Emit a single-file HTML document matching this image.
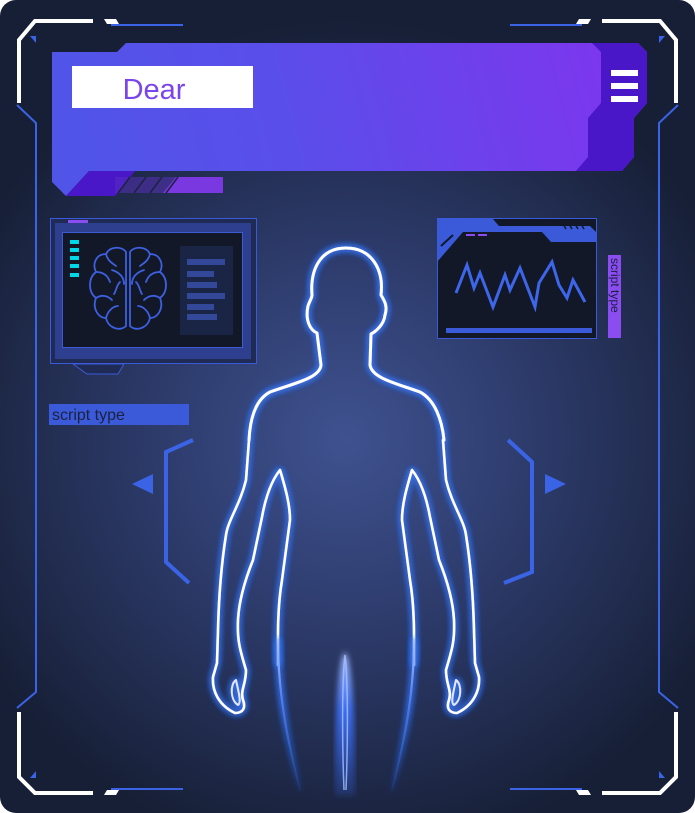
<!DOCTYPE html>
<html><head><meta charset="utf-8"><style>
html,body{margin:0;padding:0;background:#fff;width:695px;height:813px;overflow:hidden}
svg{display:block}
text{font-family:"Liberation Sans",sans-serif}
</style></head><body>
<svg width="695" height="813" viewBox="0 0 695 813" xmlns="http://www.w3.org/2000/svg">
<defs>
<radialGradient id="bg" cx="345" cy="440" r="420" gradientUnits="userSpaceOnUse">
<stop offset="0" stop-color="#3f5290"/><stop offset="0.45" stop-color="#2d3b6b"/><stop offset="1" stop-color="#171f36"/></radialGradient>
<linearGradient id="ban" x1="52" y1="190" x2="640" y2="40" gradientUnits="userSpaceOnUse">
<stop offset="0" stop-color="#4f55e8"/><stop offset="0.4" stop-color="#5a4eea"/><stop offset="1" stop-color="#8034ee"/></linearGradient>
<linearGradient id="fade" x1="0" y1="600" x2="0" y2="800" gradientUnits="userSpaceOnUse">
<stop offset="0" stop-color="#e8eeff"/><stop offset="0.5" stop-color="#4f7cf0"/><stop offset="1" stop-color="#3060e0" stop-opacity="0"/></linearGradient>
<linearGradient id="flame" x1="0" y1="650" x2="0" y2="800" gradientUnits="userSpaceOnUse">
<stop offset="0" stop-color="#a8c0ff"/><stop offset="0.4" stop-color="#3d6ef0"/><stop offset="1" stop-color="#2f5ee0" stop-opacity="0.2"/></linearGradient>
<filter id="glow" x="-30%" y="-30%" width="160%" height="160%">
<feGaussianBlur in="SourceAlpha" stdDeviation="3.5" result="b"/>
<feFlood flood-color="#3a78ff"/><feComposite in2="b" operator="in" result="g"/>
<feMerge><feMergeNode in="g"/><feMergeNode in="g"/><feMergeNode in="g"/><feMergeNode in="SourceGraphic"/></feMerge></filter>
<filter id="blur2"><feGaussianBlur stdDeviation="3"/></filter>
</defs>
<rect x="0" y="0" width="695" height="813" rx="16" fill="url(#bg)"/>
<g fill="none" stroke="#3a63e6" stroke-width="2">
<polyline points="17,105 36,123 36,692 17,708"/>
<polyline points="678,105 659,123 659,692 678,708"/>
<line x1="111" y1="25" x2="183" y2="25"/><line x1="510" y1="25" x2="582" y2="25"/>
<line x1="111" y1="789" x2="183" y2="789"/><line x1="510" y1="789" x2="582" y2="789"/>
</g>
<g fill="none" stroke="#fff" stroke-width="4">
<polyline points="19,103 19,40 35,21 93,21"/>
<polyline points="676,103 676,40 660,21 602,21"/>
<polyline points="19,712 19,777 35,793 93,793"/>
<polyline points="676,712 676,777 660,793 602,793"/>
</g>
<g fill="#fff">
<polygon points="104,19 116,19 119,24 107,24"/><polygon points="591,19 579,19 576,24 588,24"/>
<polygon points="104,795 116,795 119,790 107,790"/><polygon points="591,795 579,795 576,790 588,790"/>
</g>
<g fill="#3a63e6">
<polygon points="30,36 36,36 36,43"/><polygon points="665,36 659,36 659,43"/>
<polygon points="30,778 36,778 36,771"/><polygon points="665,778 659,778 659,771"/>
</g>
<polygon points="52,52 117,52 126,43 638,43 647,52 647,103 634,118 634,157 622,171 89,171 66,196 52,182" fill="url(#ban)"/>
<polygon points="592,43 638,43 647,52 647,103 634,118 634,157 622,171 576,171 588,157 588,118 601,103 601,52" fill="#4a17c8"/>
<polygon points="66,196 89,171 135,171 115,196" fill="#4a17c8"/>
<g>
<rect x="115" y="177" width="108" height="16" fill="#5a2fc0" opacity="0.5"/>
<polygon points="176,177 223,177 223,193 163,193" fill="#7a38e0"/>
<g stroke="#1c2340" stroke-width="1.5"><line x1="130" y1="177" x2="118" y2="193"/><line x1="146" y1="177" x2="134" y2="193"/><line x1="162" y1="177" x2="150" y2="193"/><line x1="178" y1="177" x2="166" y2="193"/></g>
</g>
<rect x="72" y="66" width="181" height="42" fill="#fff"/>
<text x="154" y="99" font-size="29" fill="#7b45ea" text-anchor="middle">Dear</text>
<g fill="#fff"><rect x="611" y="70" width="27" height="6"/><rect x="611" y="83" width="27" height="6"/><rect x="611" y="96" width="27" height="6"/></g>
<rect x="50.5" y="218.5" width="206" height="145" fill="#1f2a55" stroke="#3a5ad9"/>
<rect x="55" y="223" width="196" height="136" fill="#2d3f8e"/>
<polygon points="73,364 87,374 118,374 124,364" fill="#1f2a55" stroke="#3a5ad9"/>
<rect x="68" y="220" width="20" height="3" fill="#8b4cf0"/>
<rect x="62.5" y="232.5" width="180" height="115" fill="#121828" stroke="#3d5bd0"/>
<g fill="#00d8e8"><rect x="70" y="240" width="9" height="4"/><rect x="70" y="248" width="9" height="4"/><rect x="70" y="256" width="9" height="4"/><rect x="70" y="264" width="9" height="4"/><rect x="70" y="273" width="9" height="4"/></g>
<g fill="none" stroke="#3d5fe0" stroke-width="1.8" stroke-linecap="round">
<path d="M126,252 C122,246 110,246 106,254 C96,254 92,264 96,272 C88,278 88,292 96,298 C92,308 98,318 106,318 C108,328 120,332 126,326 Z"/>
<path d="M130,252 C134,246 146,246 150,254 C160,254 164,264 160,272 C168,278 168,292 160,298 C164,308 158,318 150,318 C148,328 136,332 130,326 Z"/>
<path d="M106,254 C108,262 114,264 116,266 M96,272 C104,272 108,276 110,282 M96,298 C102,294 108,296 112,300 M106,318 C108,310 114,306 118,306 M120,282 C116,286 116,292 114,294 M112,270 C118,272 124,276 124,284"/>
<path d="M150,254 C148,262 142,264 140,266 M160,272 C152,272 148,276 146,282 M160,298 C154,294 148,296 144,300 M150,318 C148,310 142,306 138,306 M136,282 C140,286 140,292 142,294 M144,270 C138,272 132,276 132,284"/>
</g>
<rect x="180" y="246" width="53" height="89" fill="#1a2444"/>
<g fill="#34489a"><rect x="187" y="259" width="38" height="6"/><rect x="187" y="271" width="27" height="6"/><rect x="187" y="282" width="30" height="6"/><rect x="187" y="293" width="38" height="6"/><rect x="187" y="304" width="27" height="6"/><rect x="187" y="314" width="30" height="6"/></g>
<rect x="437.5" y="218.5" width="159" height="120" fill="#121828" stroke="#3a5ad9"/>
<polygon points="437,218 492,218 499,226 590,226 597,233 597,242 551,242 542,232 463,232 437,262" fill="#3a5ad9"/>
<g stroke="#121828" stroke-width="1.5"><line x1="566" y1="229" x2="563" y2="224"/><line x1="572" y1="229" x2="569" y2="224"/><line x1="578" y1="229" x2="575" y2="224"/><line x1="584" y1="229" x2="581" y2="224"/></g>
<line x1="441" y1="246" x2="453" y2="235" stroke="#121828" stroke-width="2"/>
<rect x="466" y="234" width="9" height="2" fill="#8b4cf0"/><rect x="478" y="234" width="9" height="2" fill="#8b4cf0"/>
<rect x="446" y="328" width="146" height="5" fill="#3a5ad9"/>
<polyline points="456,293 467,265 474,288 480,273 493,307 505,275 510,290 520,268 535,307 539,283 552,262 559,285 567,298 573,280 585,302" fill="none" stroke="#3d66ea" stroke-width="3" stroke-linejoin="miter"/>
<rect x="608" y="255" width="13" height="83" fill="#8b4cf0"/>
<text transform="translate(611,258) rotate(90)" font-size="12" fill="#1a2240">script type</text>
<rect x="49" y="404" width="140" height="21" fill="#3a5ad9"/>
<text x="52" y="420" font-size="16" fill="#1a2240">script type</text>
<g fill="none" stroke="#3a63e6" stroke-width="4">
<polyline points="193,440 166,452 166,562 189,583"/>
<polyline points="508,440 532,462 532,572 504,583"/>
</g>
<polygon points="132,484 153,474 153,494" fill="#3a63e6"/>
<polygon points="566,484 545,474 545,494" fill="#3a63e6"/>
<g filter="url(#glow)" fill="none" stroke-linejoin="round" stroke-linecap="round">
<path stroke="#fff" stroke-width="3" d="M249,440 C250,420 255,400 270,392 C295,383 320,378 321,365 L317,333 C310,330 305,320 308,306 C310,300 312,298 312,295 C310,270 320,248 346,248 C372,248 384,270 381,295 C384,300 388,306 385,315 C384,325 375,332 371,334 L370,365 C372,378 395,383 420,392 C435,400 442,420 444,440"/>
<g id="arm">
<path stroke="#fff" stroke-width="2.6" d="M249,440 L246,480 C240,505 228,520 226,535 C222,560 219,590 218,630 L217,663 L213,677 C212,690 218,705 235,713 C243,713 246,708 243,700 C240,690 246,685 246,670 C240,650 237,640 238,620 C239,600 245,580 253,560 L262,517 C266,495 272,480 280,470 C286,490 290,505 290,520 L282,580 C277,610 278,640 278,665"/>
<path stroke="#dfe8ff" stroke-width="2" d="M236,680 C230,684 230,700 238,705 C242,703 238,690 236,680 Z"/>
</g>
<use href="#arm" transform="translate(692,0) scale(-1,1)"/>
</g>
<g filter="url(#glow)" fill="none" stroke="url(#fade)" stroke-width="2.2" stroke-linecap="round">
<path d="M278,640 C278,700 290,750 300,790"/>
<path d="M414,640 C414,700 402,750 392,790"/>
</g>
<path d="M345,652 C338,660 335,720 335,795 L355,795 C355,720 352,660 345,652 Z" fill="url(#flame)" filter="url(#blur2)"/>
<path d="M345,655 C342,680 342,740 344,790 M345,655 C348,680 348,740 346,790" stroke="#a8c0ff" stroke-width="1.5" fill="none" opacity="0.8"/>
</svg>
</body></html>
